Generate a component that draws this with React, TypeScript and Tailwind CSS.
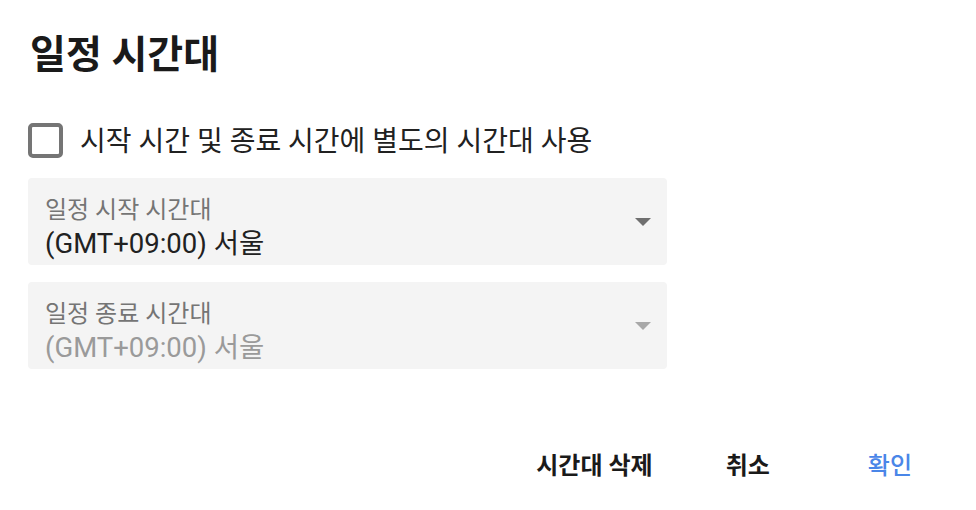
const font = { fontFamily: "Roboto, 'Noto Sans CJK KR', sans-serif" };

const Arrow = ({ disabled }: { disabled?: boolean }) => (
  <svg width="16" height="8" viewBox="0 0 16 8" className={disabled ? "fill-[#a8a8a8]" : "fill-[#6f6f6f]"}>
    <path d="M0 0h16L8 8z" />
  </svg>
);

const TimezoneField = ({ label, value, disabled }: { label: string; value: string; disabled?: boolean }) => (
  <div className="flex h-[87px] w-[639px] items-center justify-between rounded-[4px] bg-[#f4f4f4] pl-[17px] pr-[16px]">
    <div className="flex flex-col pt-[12px]">
      <span className="text-[24px] leading-[32px] text-[#757575]">{label}</span>
      <span className={`text-[27.5px] leading-[36px] ${disabled ? "text-[#9a9a9a]" : "text-[#212121]"}`}>{value}</span>
    </div>
    <Arrow disabled={disabled} />
  </div>
);

export default function App() {
  return (
    <div className="h-[510px] w-[976px] bg-white" style={font}>
      <div className="px-[28px]">
        {/* Title */}
        <div className="flex h-[110px] items-center">
          <h1 className="pl-[2px] text-[39px] font-bold leading-none text-[#1a1a1a]">일정 시간대</h1>
        </div>

        {/* Checkbox */}
        <div className="flex h-[60px] items-center">
          <div className="h-[35px] w-[35px] rounded-[5px] border-[4px] border-[#757575]" />
          <span className="ml-[17px] pt-[4px] text-[28px] leading-none text-[#212121]">
            시작 시간 및 종료 시간에 별도의 시간대 사용
          </span>
        </div>

        {/* Fields */}
        <div className="mt-[8px] flex flex-col gap-[17px]">
          <TimezoneField label="일정 시작 시간대" value="(GMT+09:00) 서울" />
          <TimezoneField label="일정 종료 시간대" value="(GMT+09:00) 서울" disabled />
        </div>
      </div>

      {/* Actions */}
      <div className="mt-[67px] flex h-[60px] items-center justify-end pr-[64px] text-[24px] font-bold leading-none">
        <button className="text-[#1a1a1a]">시간대 삭제</button>
        <button className="ml-[73px] text-[#1a1a1a]">취소</button>
        <button className="ml-[98px] font-medium text-[#4a86e8]">확인</button>
      </div>
    </div>
  );
}
